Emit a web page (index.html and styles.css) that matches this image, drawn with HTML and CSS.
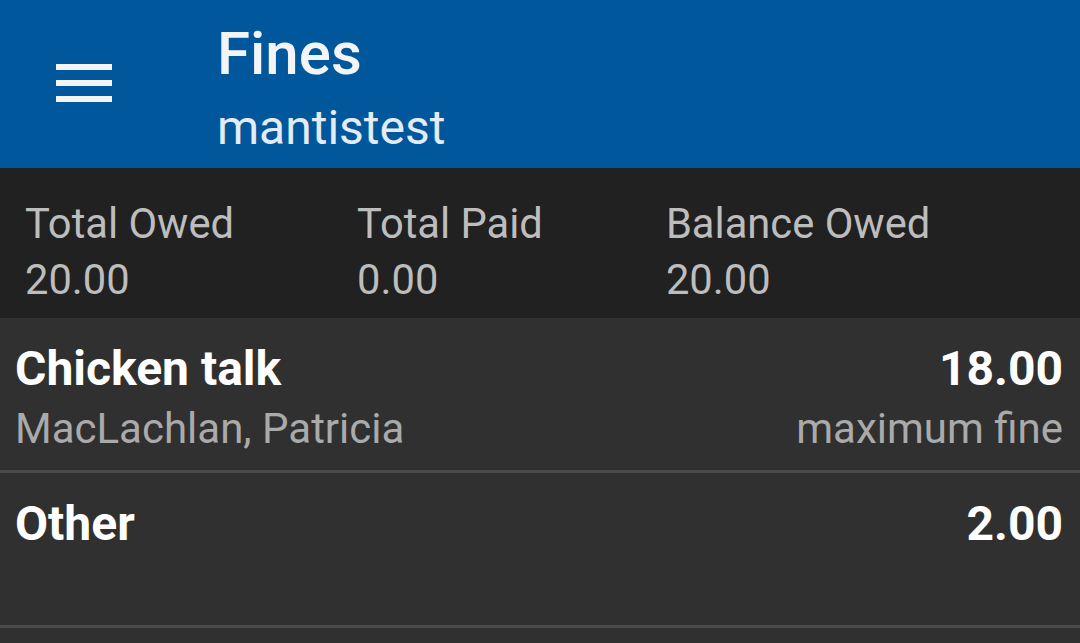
FILE: index.html
```html
<!DOCTYPE html>
<html>
<head>
<meta charset="utf-8">
<link rel="stylesheet" href="styles.css">
</head>
<body>
<header class="appbar">
  <div class="menu-btn">
    <span class="bar"></span><span class="bar"></span><span class="bar"></span>
  </div>
  <div class="titles">
    <div class="title">Fines</div>
    <div class="subtitle">mantistest</div>
  </div>
</header>
<section class="summary">
  <div class="stat"><div class="stat-label">Total Owed</div><div class="stat-value">20.00</div></div>
  <div class="stat"><div class="stat-label">Total Paid</div><div class="stat-value">0.00</div></div>
  <div class="stat"><div class="stat-label">Balance Owed</div><div class="stat-value">20.00</div></div>
</section>
<main class="list">
  <div class="row">
    <div class="row-left">
      <div class="row-title">Chicken talk</div>
      <div class="row-sub">MacLachlan, Patricia</div>
    </div>
    <div class="row-right">
      <div class="row-amount">18.00</div>
      <div class="row-sub">maximum fine</div>
    </div>
  </div>
  <div class="row">
    <div class="row-left">
      <div class="row-title">Other</div>
    </div>
    <div class="row-right">
      <div class="row-amount">2.00</div>
    </div>
  </div>
</main>
</body>
</html>
```
FILE: styles.css
```css
html, body {
  margin: 0;
  padding: 0;
  height: 100%;
}
body {
  font-family: Roboto, "Liberation Sans", sans-serif;
  background: #303030;
  overflow: hidden;
}
.appbar {
  height: 168px;
  background: #01579b;
  display: flex;
  align-items: flex-start;
  box-sizing: border-box;
}
.menu-btn {
  width: 56px;
  margin: 64px 0 0 56px;
  display: flex;
  flex-direction: column;
  gap: 10px;
}
.bar {
  display: block;
  height: 6px;
  background: #f5f5f5;
}
.titles {
  margin-left: 105px;
  padding-top: 18px;
  color: #f2f4f7;
}
.title {
  font-size: 60px;
  font-weight: 500;
  line-height: 72px;
}
.subtitle {
  font-size: 48px;
  line-height: 52px;
  margin-top: 12px;
  color: #e4ebf3;
}
.summary {
  height: 150px;
  background: #212121;
  display: flex;
  gap: 123px;
  padding: 0 25px;
  box-sizing: border-box;
  color: #bdbdbd;
  font-size: 41.7px;
}
.stat {
  padding-top: 28px;
}
.stat-label, .stat-value {
  line-height: 56px;
}
.list {
  background: #303030;
}
.row {
  height: 152px;
  border-bottom: 3px solid #4a4a4a;
  display: flex;
  justify-content: space-between;
  padding: 0 17px 0 15px;
}
.row-left, .row-right {
  padding-top: 23px;
}
.row-right {
  text-align: right;
}
.row-title, .row-amount {
  font-size: 48px;
  font-weight: 700;
  color: #ffffff;
  line-height: 56px;
}
.row-sub {
  font-size: 42px;
  color: #aaaaaa;
  line-height: 64px;
}
```
